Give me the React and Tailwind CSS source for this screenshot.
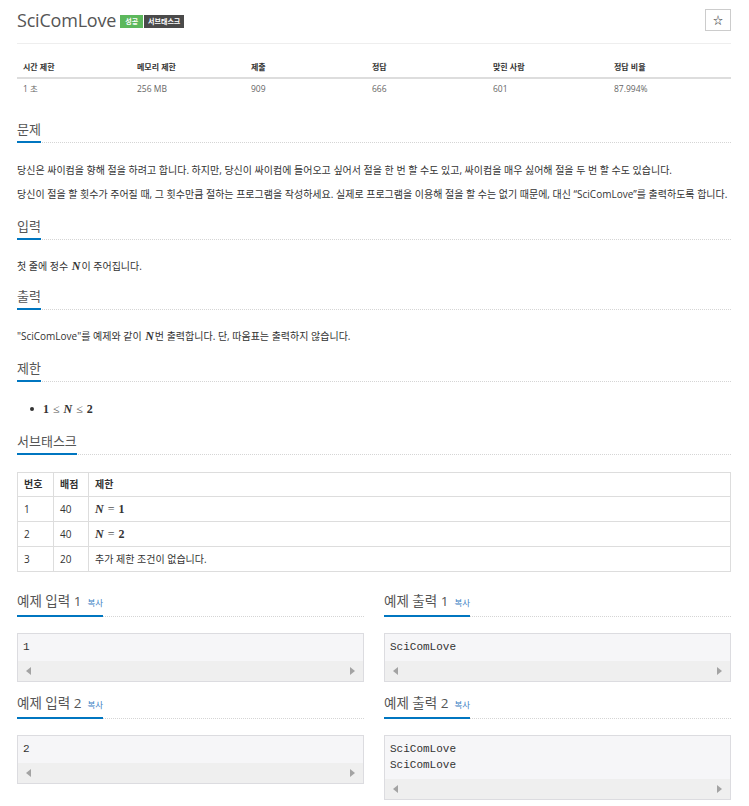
import React from 'react'

const FONT = { fontFamily: '"Open Sans", "Noto Sans CJK KR", sans-serif' }

const INFO = [
  { label: '시간 제한', value: '1 초' },
  { label: '메모리 제한', value: '256 MB' },
  { label: '제출', value: '909' },
  { label: '정답', value: '666' },
  { label: '맞힌 사람', value: '601' },
  { label: '정답 비율', value: '87.994%' },
]

const N = () => <span className="font-['Liberation_Serif'] italic text-[12px] font-semibold mx-[1px]">N</span>

// math expression like MathJax: relations spaced out
const Rel = ({ children }) => <span className="mx-[4px] font-normal text-[#555]">{children}</span>

function Heading({ children, small }) {
  return (
    <div className="border-b border-dotted border-[#d5d5d5]">
      <h2 className={`inline-block border-b-2 border-[#0076c0] -mb-px leading-[20px] pb-[2px] text-[#555] font-normal ${small ? 'text-[13.5px]' : 'text-[13px]'}`}>
        {children}
        {small && <span className="ml-[6px] text-[8.5px] text-[#3d7fc4]">복사</span>}
      </h2>
    </div>
  )
}

function Sample({ title, lines }) {
  return (
    <div>
      <Heading small>{title}</Heading>
      <div className="mt-[16px] border border-[#dcdce0] bg-[#f6f6f8]">
        <div className="px-[5px] pt-[5px] pb-[6px] font-['Liberation_Mono'] text-[11px] leading-[16px] text-[#333]">
          {lines.map((l, i) => <div key={i}>{l}</div>)}
        </div>
        <div className="h-[20px] bg-[#efefef] flex items-center justify-between px-[8px]">
          <span className="w-0 h-0 border-y-[4px] border-y-transparent border-r-[5px] border-r-[#a3a3a3]"></span>
          <span className="w-0 h-0 border-y-[4px] border-y-transparent border-l-[5px] border-l-[#a3a3a3]"></span>
        </div>
      </div>
    </div>
  )
}

export default function App() {
  return (
    <div className="bg-white min-h-screen pl-[17px] pr-[18px] pt-[9px] pb-[8px] text-[10px] text-[#333]" style={FONT}>

      {/* title */}
      <div className="flex items-center justify-between h-[22px]">
        <div className="flex items-center">
          <h1 className="text-[18px] leading-[22px] tracking-[-0.2px] text-[#555] font-normal">SciComLove</h1>
          <span className="ml-[4px] mt-[3px] bg-[#5cb85c] text-white text-[7px] font-bold px-[5px] leading-[13px]">성공</span>
          <span className="ml-[1px] mt-[3px] bg-[#4a4a4a] text-white text-[7px] font-bold px-[4px] leading-[13px]">서브태스크</span>
        </div>
        <button className="w-[26px] h-[22px] border border-[#ccc] bg-white flex items-center justify-center text-[10px] text-[#333]">☆</button>
      </div>
      <div className="mt-[12px] border-t border-[#eee]"></div>

      {/* info table */}
      <div className="mt-[12px]">
        <div className="grid grid-cols-[114px_114px_121px_121px_121px_1fr] border-b-2 border-[#ddd] h-[23px] items-center font-bold text-[8px]">
          {INFO.map(c => <div key={c.label} className="px-[6px]">{c.label}</div>)}
        </div>
        <div className="grid grid-cols-[114px_114px_121px_121px_121px_1fr] h-[21px] items-center text-[#666] text-[8.5px]">
          {INFO.map(c => <div key={c.label} className="px-[6px]">{c.value}</div>)}
        </div>
      </div>

      {/* 문제 */}
      <section className="mt-[19px]">
        <Heading>문제</Heading>
        <p className="mt-[20px] leading-[14px] mb-[10px]">당신은 싸이컴을 향해 절을 하려고 합니다. 하지만, 당신이 싸이컴에 들어오고 싶어서 절을 한 번 할 수도 있고, 싸이컴을 매우 싫어해 절을 두 번 할 수도 있습니다.</p>
        <p className="leading-[14px] mb-[10px]">당신이 절을 할 횟수가 주어질 때, 그 횟수만큼 절하는 프로그램을 작성하세요. 실제로 프로그램을 이용해 절을 할 수는 없기 때문에, 대신 “SciComLove”를 출력하도록 합니다.</p>
      </section>

      <section className="mt-[15px]">
        <Heading>입력</Heading>
        <p className="mt-[19px] leading-[14px] mb-[10px]">첫 줄에 정수 <N />이 주어집니다.</p>
      </section>

      <section className="mt-[13px]">
        <Heading>출력</Heading>
        <p className="mt-[19px] leading-[14px] mb-[10px]">"SciComLove"를 예제와 같이 <N />번 출력합니다. 단, 따옴표는 출력하지 않습니다.</p>
      </section>

      <section className="mt-[15px]">
        <Heading>제한</Heading>
        <ul className="mt-[20px] mb-[10px] pl-[13px]">
          <li className="flex items-center leading-[14px]">
            <span className="w-[4px] h-[4px] rounded-full bg-[#333] mr-[9px]"></span>
            <span className="font-['Liberation_Serif'] text-[12px] font-semibold">
              1<Rel>≤</Rel><i>N</i><Rel>≤</Rel>2
            </span>
          </li>
        </ul>
      </section>

      <section className="mt-[15px]">
        <Heading>서브태스크</Heading>
        <table className="mt-[17px] w-full border-collapse border border-[#ddd]">
          <thead>
            <tr className="h-[24px]">
              <th className="w-[36px] border border-[#ddd] px-[6px] text-left font-bold">번호</th>
              <th className="w-[35px] border border-[#ddd] px-[6px] text-left font-bold">배점</th>
              <th className="border border-[#ddd] px-[6px] text-left font-bold">제한</th>
            </tr>
          </thead>
          <tbody>
            <tr className="h-[25px]">
              <td className="border border-[#ddd] px-[6px]">1</td>
              <td className="border border-[#ddd] px-[6px]">40</td>
              <td className="border border-[#ddd] px-[6px] font-['Liberation_Serif'] text-[12px] font-semibold"><i>N</i><Rel>=</Rel>1</td>
            </tr>
            <tr className="h-[25px]">
              <td className="border border-[#ddd] px-[6px]">2</td>
              <td className="border border-[#ddd] px-[6px]">40</td>
              <td className="border border-[#ddd] px-[6px] font-['Liberation_Serif'] text-[12px] font-semibold"><i>N</i><Rel>=</Rel>2</td>
            </tr>
            <tr className="h-[25px]">
              <td className="border border-[#ddd] px-[6px]">3</td>
              <td className="border border-[#ddd] px-[6px]">20</td>
              <td className="border border-[#ddd] px-[6px]">추가 제한 조건이 없습니다.</td>
            </tr>
          </tbody>
        </table>
      </section>

      {/* samples */}
      <div className="mt-[19px] grid grid-cols-2 gap-x-[20px] gap-y-[11px]">
        <Sample title="예제 입력 1" lines={['1']} />
        <Sample title="예제 출력 1" lines={['SciComLove']} />
        <Sample title="예제 입력 2" lines={['2']} />
        <Sample title="예제 출력 2" lines={['SciComLove', 'SciComLove']} />
      </div>
    </div>
  )
}
